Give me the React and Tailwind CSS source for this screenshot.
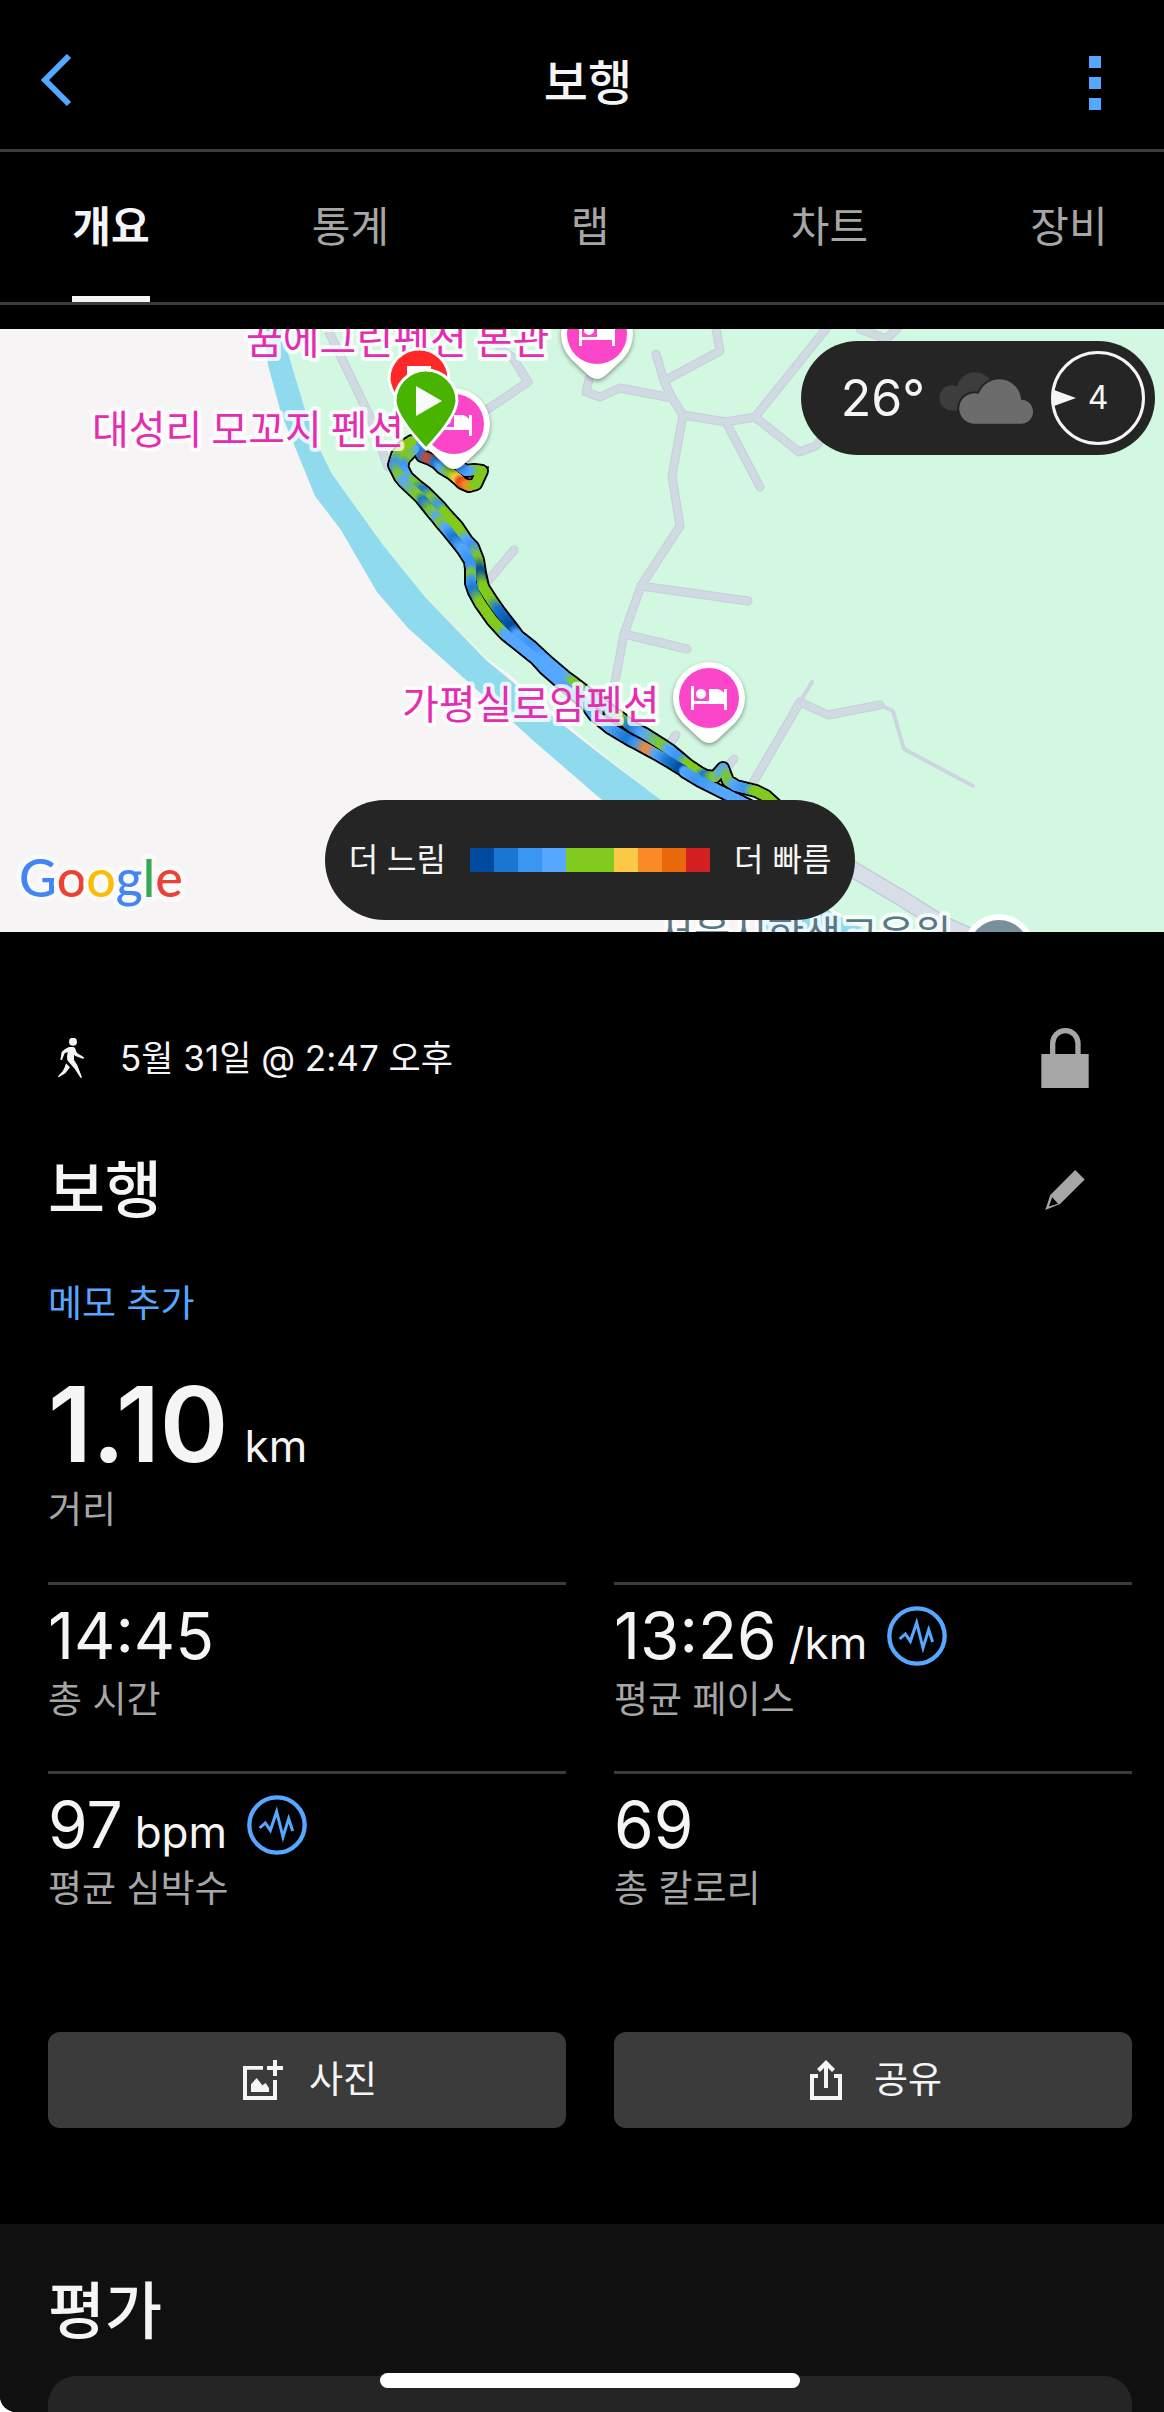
import { useState } from "react";

const NAVY = "#004a9f";
const BLUE = "#1976d2";
const SKY = "#3b95f3";
const LIGHT = "#55a7ff";
const GREEN = "#81ca1e";
const YELLOW = "#fcc947";
const ORANGE = "#f98a26";
const RED = "#e0451a";

const tabs = ["개요", "통계", "랩", "차트", "장비"];

const stats = [
  { value: "14:45", label: "총 시간" },
  { value: "13:26", unit: "/km", label: "평균 페이스", zones: true },
  { value: "97", unit: "bpm", label: "평균 심박수", zones: true },
  { value: "69", label: "총 칼로리" },
];

// Pace samples: x, y, color
const outbound = [
  [412, 112, GREEN], [404, 117, GREEN], [397, 126, GREEN], [394, 136, SKY], [400, 148, GREEN],
  [404, 153, LIGHT], [420, 168, GREEN], [424, 173, BLUE], [432, 183, GREEN], [438, 190, LIGHT],
  [441, 194, GREEN], [447, 201, LIGHT], [455, 211, BLUE], [463, 221, LIGHT], [470, 232, SKY],
  [471, 240, SKY], [471, 246, GREEN], [471, 254, SKY], [474, 263, BLUE], [480, 274, GREEN],
  [492, 291, GREEN], [502, 302, GREEN], [506, 306, LIGHT], [536, 330, LIGHT], [545, 340, LIGHT],
  [561, 354, LIGHT], [586, 375, SKY], [594, 386, LIGHT], [610, 399, LIGHT], [630, 411, BLUE],
  [638, 415, SKY], [649, 421, ORANGE], [658, 426, LIGHT], [670, 433, BLUE], [683, 441, NAVY],
  [685, 443, LIGHT], [700, 452, SKY], [722, 463, LIGHT], [750, 477, LIGHT],
];

const inbound = [
  [414, 120, LIGHT], [404, 130, GREEN], [402, 138, SKY], [407, 148, LIGHT], [416, 156, GREEN],
  [425, 163, BLUE], [432, 170, GREEN], [440, 178, SKY], [445, 184, GREEN], [457, 197, GREEN],
  [463, 206, GREEN], [467, 212, LIGHT], [473, 218, SKY], [478, 231, GREEN], [480, 244, NAVY],
  [483, 258, GREEN], [492, 272, GREEN], [499, 282, BLUE], [513, 300, NAVY], [518, 307, LIGHT],
  [532, 318, SKY], [547, 332, LIGHT], [567, 349, LIGHT], [574, 354, GREEN], [595, 370, LIGHT],
  [611, 382, SKY], [622, 390, GREEN], [632, 398, BLUE], [645, 405, LIGHT], [664, 417, GREEN],
  [670, 421, LIGHT], [681, 430, SKY], [688, 436, GREEN], [700, 444, GREEN], [706, 447, BLUE],
  [715, 448, GREEN], [723, 439, LIGHT], [728, 452, GREEN], [736, 457, LIGHT], [748, 460, SKY],
  [756, 462, GREEN], [766, 467, GREEN], [778, 478, GREEN],
];

const loop = [
  [417, 118, LIGHT], [422, 127, BLUE], [430, 130, RED], [437, 134, BLUE], [442, 139, LIGHT],
  [452, 145, GREEN], [458, 150, YELLOW], [462, 154, RED], [469, 157, ORANGE], [476, 155, GREEN],
  [482, 142, GREEN], [474, 141, GREEN], [466, 142, LIGHT], [460, 138, SKY],
];

const mix = (from, to, t) => {
  const channel = (hex, i) => parseInt(hex.slice(i, i + 2), 16);
  const parts = [1, 3, 5].map((i) => Math.round(channel(from, i) + (channel(to, i) - channel(from, i)) * t));
  return `rgb(${parts.join(",")})`;
};

function Track({ points, width }) {
  const steps = 6;
  const pieces = [];
  for (let i = 0; i < points.length - 1; i++) {
    const [x1, y1, c1] = points[i];
    const [x2, y2, c2] = points[i + 1];
    for (let s = 0; s < steps; s++) {
      const a = s / steps;
      const b = (s + 1) / steps;
      pieces.push(
        <line
          key={`${i}-${s}`}
          x1={x1 + (x2 - x1) * a}
          y1={y1 + (y2 - y1) * a}
          x2={x1 + (x2 - x1) * b}
          y2={y1 + (y2 - y1) * b}
          stroke={mix(c1, c2, (a + b) / 2)}
        />
      );
    }
  }
  return <g strokeWidth={width} strokeLinecap="round">{pieces}</g>;
}

const toPath = (points) => points.map(([x, y]) => `${x},${y}`).join(" ");

function LodgingPin({ x, y }) {
  return (
    <g transform={`translate(${x} ${y})`}>
      <path
        d="M-26 25A36 36 0 1 1 26 25L9 41Q0 49 -9 41Z"
        fill="#fff"
        style={{ filter: "drop-shadow(0 2px 2px rgba(0,0,0,0.4))" }}
      />
      <circle r="30" fill="#fb46c9" />
      <path d="M-18 -12H-15V3H0V-9H7Q12 -9 15 -5V-9H18V12H15V6H-15V12H-18Z" fill="#fff" />
      <circle cx="-8" cy="-4" r="5" fill="#fff" />
    </g>
  );
}

function ActivityMap() {
  return (
    <svg
      viewBox="0 0 1164 603"
      preserveAspectRatio="xMidYMid slice"
      className="block h-full w-full"
      role="img"
      aria-label="지도"
    >
      <rect width="1164" height="603" fill="#f6f4f5" />
      <path
        d="M281 0L291 34L306 84L321 123L332 145L383 216L425 268L486 329L509 345L536 368L600 423L661 471L840 585L870 603H1164V0Z"
        fill="#d3f8e2"
      />
      <path
        d="M264 0L268 36L281 84L295 118L315 167L341 201L377 263L408 299L486 369L536 414L602 471L770 603H870L826 580L661 471L600 425L563 396L509 350L486 331L425 268L383 216L332 145L321 123L306 84L291 34L281 0Z"
        fill="#90daee"
      />

      {/* Roads: darker casing under the fill */}
      {[
        ["#c6cfd9", 9],
        ["#d0dae3", 7],
      ].map(([color, width]) => (
        <g key={color} fill="none" stroke={color} strokeWidth={width} strokeLinecap="round" strokeLinejoin="round">
          <path d="M683 86L672 147L680 197L641 257L624 305L615 353" />
          <path d="M641 257L748 272M624 305L687 320" />
          <path d="M589 50L586 63L600 68L620 59L672 69L683 86L726 93L755 88L826 0" />
          <path d="M656 25L664 52L672 69M664 52L720 22L716 0" />
          <path d="M726 93L760 158M755 88L799 123L816 117L826 104" />
          <path d="M860 0L886 10L897 0" />
          <path d="M753 454L800 373L828 386L880 376" />
          <path d="M668 417L676 406M727 438L734 430" />
          <path d="M329 3L371 90L388 138" />
          <path d="M488 80L528 53L513 29L500 20M514 221L488 252" />
        </g>
      ))}
      <g fill="none" stroke="#cdd6e0" strokeWidth="4" strokeLinecap="round" strokeLinejoin="round">
        <path d="M880 376L893 382L904 420L973 457M800 373L812 353" />
      </g>
      <path d="M780 490L854 541L903 570L941 594L976 610" fill="none" stroke="#c3ccd8" strokeWidth="17" />
      <path d="M780 490L854 541L903 570L941 594L976 610" fill="none" stroke="#d7dee8" strokeWidth="14" />

      {/* Route */}
      <g fill="none" stroke="#000" strokeWidth="14" strokeLinejoin="round" strokeLinecap="round">
        <polyline points={toPath(outbound)} />
        <polyline points={toPath(inbound)} />
        <polyline points={toPath(loop)} />
      </g>
      <path d="M484 139L487 139L482 150Z" stroke="#000" strokeWidth="3" fill={GREEN} />
      <Track points={loop} width={10} />
      <Track points={inbound} width={10} />
      <Track points={outbound} width={10} />

      <g
        fontFamily="'Noto Sans CJK KR', sans-serif"
        fontSize="40"
        fill="#e52db2"
        stroke="#fff"
        strokeOpacity="0.8"
        strokeWidth="8"
        strokeLinejoin="round"
        paintOrder="stroke"
      >
        <text x="246" y="25">꿈에그린펜션 본관</text>
        <text x="92" y="115">대성리 모꼬지 펜션</text>
        <text x="402" y="390">가평실로암펜션</text>
        <text x="657" y="620" fill="#587888">서울시학생교육원</text>
      </g>

      <LodgingPin x={597} y={5} />
      <LodgingPin x={454} y={95} />
      <LodgingPin x={709} y={369} />
      <circle cx="999" cy="621" r="36" fill="#fff" />
      <circle cx="999" cy="621" r="30" fill="#78909c" />

      {/* Finish and start */}
      <path d="M389 50A30 30 0 1 1 449 50Q448 66 419 97Q390 66 389 50Z" fill="#ff2828" stroke="#fff" strokeWidth="3" />
      <rect x="407" y="37" width="24" height="24" fill="#fff" />
      <path d="M395 72A31 31 0 1 1 457 72Q456 88 426 120Q396 88 395 72Z" fill="#48b400" stroke="#fff" strokeWidth="3" />
      <path d="M416 57L442 72L416 87Z" fill="#fafafa" />

      <text
        x="19"
        y="568"
        fontFamily="Lato, sans-serif"
        fontSize="52"
        fontWeight="500"
        stroke="#fafafa"
        strokeWidth="10"
        strokeLinejoin="round"
        paintOrder="stroke"
      >
        <tspan fill="#4285f4">G</tspan>
        <tspan fill="#ea4335">o</tspan>
        <tspan fill="#fbbc05">o</tspan>
        <tspan fill="#4285f4">g</tspan>
        <tspan fill="#34a853">l</tspan>
        <tspan fill="#ea4335">e</tspan>
      </text>
    </svg>
  );
}

function CloudIcon() {
  return (
    <svg viewBox="0 0 288 160" className="h-[53px] w-24" aria-hidden="true">
      <g fill="#3d3d3d">
        <circle cx="38" cy="78" r="38" />
        <circle cx="108" cy="57" r="56" />
        <rect x="38" y="70" width="90" height="46" />
      </g>
      <path
        d="M102 156A46 46 0 1 1 119 66A66 66 0 0 1 247 84A36 36 0 0 1 247 156Z"
        fill="#6c6c6c"
        stroke="#252525"
        strokeWidth="12"
        paintOrder="stroke"
      />
    </svg>
  );
}

function WalkIcon() {
  return (
    <svg viewBox="0 0 78 120" className="h-10 w-[26px]" fill="currentColor" aria-hidden="true">
      <circle cx="45" cy="11" r="12" />
      <path d="M33 27H45Q52 28 54 38L57 45L78 58L76 63L52 54L48 50V66L58 82L72 118L68 120L50 92L32 72Q26 66 27 56L29 42L20 46L12 66L7 65L11 42Q20 32 33 27Z" />
      <path d="M24 76L36 88L22 106L2 118L0 115L14 100L20 88Z" />
    </svg>
  );
}

function LockIcon() {
  return (
    <svg viewBox="0 0 142 180" className="h-[60px] w-12" aria-hidden="true">
      <rect y="78" width="142" height="102" fill="currentColor" />
      <path d="M34 80V46A38 38 0 0 1 110 46V80" fill="none" stroke="currentColor" strokeWidth="16" />
    </svg>
  );
}

function PencilIcon() {
  return (
    <svg viewBox="0 0 120 122" className="size-10" fill="currentColor" aria-hidden="true">
      <path d="M91 0L120 29L45 104L0 122L15 76ZM21 83L11 111L39 103Z" fillRule="evenodd" />
    </svg>
  );
}

function PulseIcon() {
  return (
    <svg viewBox="0 0 180 180" className="size-[60px]" fill="none" stroke="currentColor" aria-hidden="true">
      <circle cx="90" cy="90" r="83" strokeWidth="13" />
      <path d="M38 99L55 84L70 106L89 50L108 126L125 71L137 108" strokeWidth="9" strokeMiterlimit="10" />
    </svg>
  );
}

function PhotoIcon() {
  return (
    <svg viewBox="0 0 120 120" className="size-10" fill="currentColor" aria-hidden="true">
      <path d="M0 18H60V29H12V108H90V60H102V120H0Z" />
      <path d="M90 0H102V18H120V30H102V48H90V30H72V18H90Z" />
      <path d="M24 96V73L41 54L58 76L68 69L78 84V96Z" />
    </svg>
  );
}

function ShareIcon() {
  return (
    <svg viewBox="0 0 32 40" className="h-10 w-8" fill="currentColor" aria-hidden="true">
      <path d="M0 14H8V18H4V36H28V18H24V14H32V40H0Z" />
      <path d="M16 0L25 9L22 12L18 8V28H14V8L10 12L7 9Z" />
    </svg>
  );
}

function Stat({ value, unit, label, zones }) {
  return (
    <div className="h-[189px] border-t-[3px] border-[#3b3b3b] pt-[21px]">
      <div className="flex h-[60px] items-center">
        <div className="flex items-baseline gap-3">
          <span className="text-[64px] leading-[60px]">{value}</span>
          {unit && <span className="text-[44px] leading-none">{unit}</span>}
        </div>
        {zones && (
          <button type="button" aria-label="구간 보기" className="ml-5 text-[#55a7ff]">
            <PulseIcon />
          </button>
        )}
      </div>
      <p className="mt-1.5 text-[37px] leading-[56px] text-[#a6a6a6]">{label}</p>
    </div>
  );
}

export default function App() {
  const [activeTab, setActiveTab] = useState("개요");

  return (
    <div className="bg-white">
      <div className="relative flex min-h-screen flex-col overflow-hidden rounded-bl-2xl bg-black font-[Inter,'Noto_Sans_CJK_KR',sans-serif] text-[#f5f5f5]">
        <header className="grid h-[152px] grid-cols-[1fr_auto_1fr] items-center border-b-[3px] border-[#3b3b3b] pt-4 pl-3">
          <button type="button" aria-label="뒤로" className="ml-7 justify-self-start text-[#55a7ff]">
            <svg viewBox="0 0 32 58" className="h-[58px] w-8" fill="none" stroke="currentColor" strokeWidth="6" aria-hidden="true">
              <path d="M29 2L5 26L29 50" />
            </svg>
          </button>
          <h1 className="text-[48px] leading-[64px] font-medium">보행</h1>
          <button type="button" aria-label="더 보기" className="mr-[63px] flex flex-col gap-[9px] justify-self-end">
            <span className="size-3 bg-[#55a7ff]" />
            <span className="size-3 bg-[#55a7ff]" />
            <span className="size-3 bg-[#55a7ff]" />
          </button>
        </header>

        <nav className="flex h-[153px] justify-between border-b-[3px] border-[#3b3b3b] pr-14 pl-[72px]">
          {tabs.map((tab) => (
            <button
              key={tab}
              type="button"
              onClick={() => setActiveTab(tab)}
              className={
                tab === activeTab
                  ? "min-w-[78px] border-b-[6px] border-[#f5f5f5] pt-1 text-[42px] font-bold"
                  : "min-w-[78px] border-b-[6px] border-transparent pt-1 text-[42px] text-[#a6a6a6]"
              }
            >
              {tab}
            </button>
          ))}
        </nav>

        <section className="relative mt-6 h-[603px]">
          <ActivityMap />
          <div className="absolute top-3 right-[9px] flex h-[114px] items-center rounded-full bg-[#252525] pr-[10px] pl-10">
            <span className="text-[50px]">26°</span>
            <div className="mr-4 ml-3.5">
              <CloudIcon />
            </div>
            <div className="relative flex size-[94px] items-center justify-center rounded-full border-[3px] border-[#f5f5f5] text-[32px]">
              <svg viewBox="0 0 22 16" className="absolute left-0 h-4 w-[22px]" fill="currentColor" aria-hidden="true">
                <path d="M0 0L22 8L0 16Z" />
              </svg>
              4
            </div>
          </div>
          <div className="absolute inset-x-0 bottom-3 flex justify-center pl-4">
            <div className="flex h-[120px] items-center gap-6 rounded-full bg-[#252525] px-6 text-[32px]">
              <span>더 느림</span>
              <div className="flex h-6 w-60">
                <span className="flex-1 bg-[#004a9f]" />
                <span className="flex-1 bg-[#1976d2]" />
                <span className="flex-1 bg-[#3b95f3]" />
                <span className="flex-1 bg-[#55a7ff]" />
                <span className="flex-2 bg-[#81ca1e]" />
                <span className="flex-1 bg-[#fcc947]" />
                <span className="flex-1 bg-[#f98a26]" />
                <span className="flex-1 bg-[#e9680c]" />
                <span className="flex-1 bg-[#d42020]" />
              </div>
              <span>더 빠름</span>
            </div>
          </div>
        </section>

        <main className="pt-24 pr-8 pb-24 pl-12">
          <div className="flex h-[60px] items-center justify-between pr-[43px]">
            <div className="flex items-center gap-9 pl-[10px]">
              <WalkIcon />
              <span className="text-[35px]">5월 31일 @ 2:47 오후</span>
            </div>
            <button type="button" aria-label="비공개" className="text-[#a6a6a6]">
              <LockIcon />
            </button>
          </div>

          <div className="mt-[62px] flex h-20 items-center justify-between pr-[47px]">
            <h2 className="text-[62px] font-medium">보행</h2>
            <button type="button" aria-label="이름 편집" className="text-[#a6a6a6]">
              <PencilIcon />
            </button>
          </div>

          <button type="button" className="mt-[46px] block text-[37px] leading-[56px] text-[#55a7ff]">
            메모 추가
          </button>

          <div className="mt-[42px] flex items-baseline gap-4">
            <span className="text-[104px] leading-[100px] font-semibold">1.10</span>
            <span className="text-[44px] leading-none">km</span>
          </div>
          <p className="mt-2 text-[37px] leading-[56px] text-[#a6a6a6]">거리</p>

          <div className="mt-11 grid grid-cols-2 gap-x-12">
            {stats.map((stat) => (
              <Stat key={stat.label} {...stat} />
            ))}
          </div>

          <div className="mt-[72px] grid grid-cols-2 gap-x-12">
            <button type="button" className="flex h-24 items-center justify-center gap-[26px] rounded-xl bg-[#3b3b3b] pl-1.5 text-[37px]">
              <PhotoIcon />
              사진
            </button>
            <button type="button" className="flex h-24 items-center justify-center gap-[32px] rounded-xl bg-[#3b3b3b] pl-1.5 text-[37px]">
              <ShareIcon />
              공유
            </button>
          </div>
        </main>

        <section className="flex flex-1 flex-col bg-[#101010] pt-12 pr-8 pl-12">
          <h2 className="text-[62px] leading-[80px] font-medium">평가</h2>
          <div className="mt-6 min-h-9 flex-1 rounded-t-[28px] bg-[#252525]" />
        </section>

        <div className="absolute bottom-6 left-[380px] h-[15px] w-[420px] rounded-full bg-white" />
      </div>
    </div>
  );
}
